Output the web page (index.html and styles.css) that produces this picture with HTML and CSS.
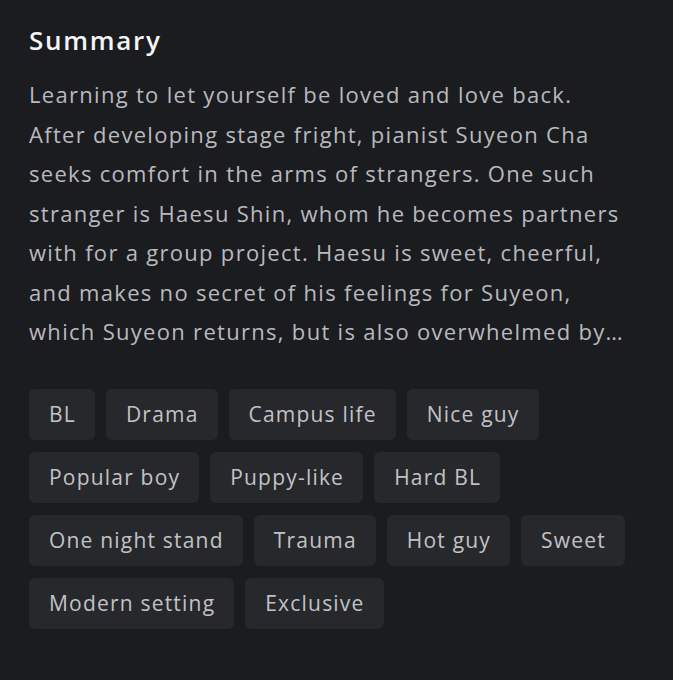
FILE: index.html
```html
<!DOCTYPE html>
<html>
<head>
<meta charset="utf-8">
<link rel="stylesheet" href="styles.css">
</head>
<body>
<section class="summary">
  <h2 class="title">Summary</h2>
  <p class="text">Learning to let yourself be loved and love back.<br>After developing stage fright, pianist Suyeon Cha<br>seeks comfort in the arms of strangers. One such<br>stranger is Haesu Shin, whom he becomes partners<br>with for a group project. Haesu is sweet, cheerful,<br>and makes no secret of his feelings for Suyeon,<br>which Suyeon returns, but is also overwhelmed by…</p>
  <ul class="tags">
    <li class="tag">BL</li>
    <li class="tag">Drama</li>
    <li class="tag">Campus life</li>
    <li class="tag">Nice guy</li>
    <li class="tag">Popular boy</li>
    <li class="tag">Puppy-like</li>
    <li class="tag">Hard BL</li>
    <li class="tag">One night stand</li>
    <li class="tag">Trauma</li>
    <li class="tag">Hot guy</li>
    <li class="tag">Sweet</li>
    <li class="tag">Modern setting</li>
    <li class="tag">Exclusive</li>
  </ul>
</section>
</body>
</html>
```
FILE: styles.css
```css
html, body {
  margin: 0;
  padding: 0;
  background: #1b1c20;
}
body {
  width: 673px;
  height: 680px;
  overflow: hidden;
  font-family: "Open Sans", "Liberation Sans", sans-serif;
}
.summary {
  padding: 24px 20px 0 29px;
}
.title {
  margin: 0;
  font-size: 26px;
  font-weight: 600;
  letter-spacing: 1.7px;
  color: #f4f4f6;
  line-height: 32px;
}
.text {
  margin: 19px 0 0;
  font-size: 22px;
  letter-spacing: 1.3px;
  line-height: 39.5px;
  color: #b9b9be;
  white-space: nowrap;
}
.tags {
  list-style: none;
  margin: 37px 0 0;
  padding: 0;
  display: flex;
  flex-wrap: wrap;
  gap: 12px 11px;
  max-width: 624px;
}
.tag {
  background: #27282c;
  color: #c2c2c6;
  font-size: 21px;
  letter-spacing: 1.2px;
  height: 51px;
  line-height: 51px;
  padding: 0 19px 0 20px;
  border-radius: 6px;
}
```
